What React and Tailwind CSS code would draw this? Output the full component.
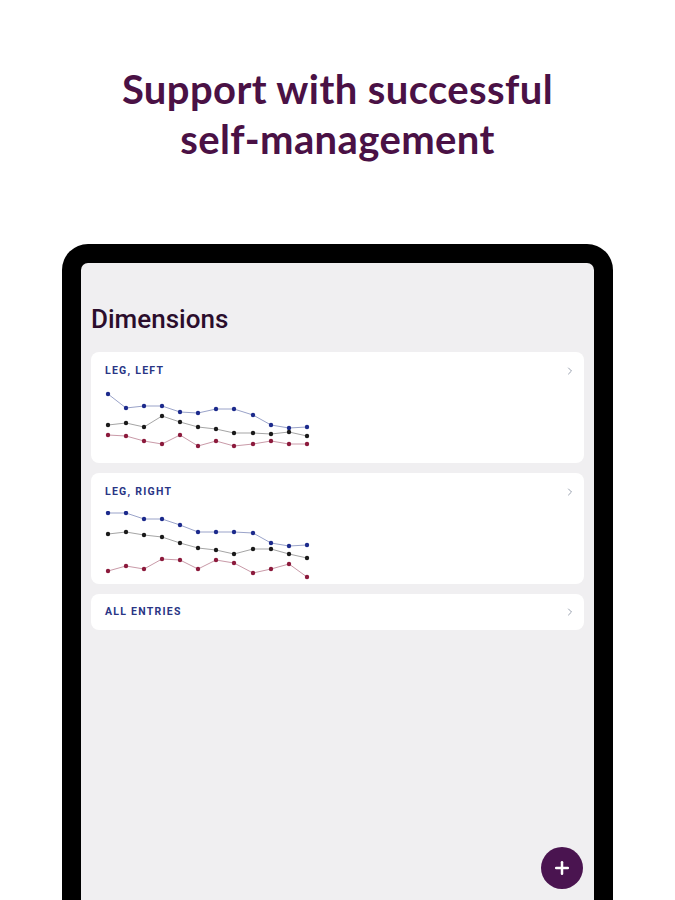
import { ChevronRight, Plus } from 'lucide-react'

const xs = [109, 127, 145, 163, 181, 199, 217, 235, 254, 272, 290, 308]

const charts = [
  {
    label: 'LEG, LEFT',
    top: 352,
    series: [
      { color: '#1c2a8c', line: '#9aa3c9', ys: [394, 408, 406, 406, 412, 413, 409, 409, 415, 425, 428, 427] },
      { color: '#1a1a1a', line: '#a5a5a5', ys: [425, 423, 427, 416, 422, 427, 429, 433, 433, 434, 432, 436] },
      { color: '#8c1a3c', line: '#c99aa8', ys: [435, 436, 441, 444, 435, 446, 441, 446, 444, 441, 444, 444] },
    ],
  },
  {
    label: 'LEG, RIGHT',
    top: 473,
    series: [
      { color: '#1c2a8c', line: '#9aa3c9', ys: [513, 513, 519, 519, 525, 532, 532, 532, 533, 543, 546, 545] },
      { color: '#1a1a1a', line: '#a5a5a5', ys: [534, 532, 535, 537, 543, 548, 550, 554, 549, 549, 554, 558] },
      { color: '#8c1a3c', line: '#c99aa8', ys: [571, 566, 569, 559, 560, 569, 560, 563, 573, 569, 564, 577] },
    ],
  },
]

function Chart({ top, series }) {
  // svg sits under the 38px header, 92px is the card's left edge
  const ox = 92
  const oy = top + 38
  return (
    <svg width="240" height="73" className="block">
      {series.map((s, i) => (
        <g key={i}>
          <polyline
            fill="none"
            stroke={s.line}
            strokeWidth="1"
            points={xs.map((x, j) => `${x - ox},${s.ys[j] - oy}`).join(' ')}
          />
          {xs.map((x, j) => (
            <circle key={j} cx={x - ox} cy={s.ys[j] - oy} r="2.2" fill={s.color} />
          ))}
        </g>
      ))}
    </svg>
  )
}

function Card({ label, h = 'h-[38px]', children }) {
  return (
    <div className="bg-white rounded-[8px]">
      <div className={`flex items-center justify-between pl-[14px] pr-[8px] ${h}`}>
        <span className="text-[10.5px] font-bold tracking-[0.12em] text-[#2a3585]">{label}</span>
        <ChevronRight size={12} strokeWidth={2} className="text-gray-400" />
      </div>
      {children}
    </div>
  )
}

export default function App() {
  return (
    <div className="h-[900px] w-[675px] overflow-hidden bg-white flex flex-col items-center" style={{ fontFamily: 'Roboto, sans-serif' }}>
      <h1
        className="mt-[64px] text-center text-[40px] leading-[50px] font-bold tracking-[0.01em] text-[#4a1145]"
        style={{ fontFamily: 'Lato, sans-serif' }}
      >
        Support with successful
        <br />
        self-management
      </h1>

      <div className="mt-[80px] w-[551px] h-[700px] shrink-0 bg-black rounded-[26px] p-[19px] pb-0">
        <div className="h-full bg-[#f0eff1] rounded-[7px] px-[10px] pt-[39px] relative">
          <h2 className="text-[26px] leading-[34px] font-medium text-[#2b0d2c]">Dimensions</h2>
          <div className="mt-[16px] flex flex-col gap-[10px]">
            {charts.map(c => (
              <Card key={c.label} label={c.label}>
                <Chart top={c.top} series={c.series} />
              </Card>
            ))}
            <Card label="ALL ENTRIES" h="h-[36px]" />
          </div>
          <div className="absolute left-[460px] top-[584px] w-[42px] h-[42px] rounded-full bg-[#4a1450] flex items-center justify-center">
            <Plus size={20} strokeWidth={3} className="text-white" />
          </div>
        </div>
      </div>
    </div>
  )
}
